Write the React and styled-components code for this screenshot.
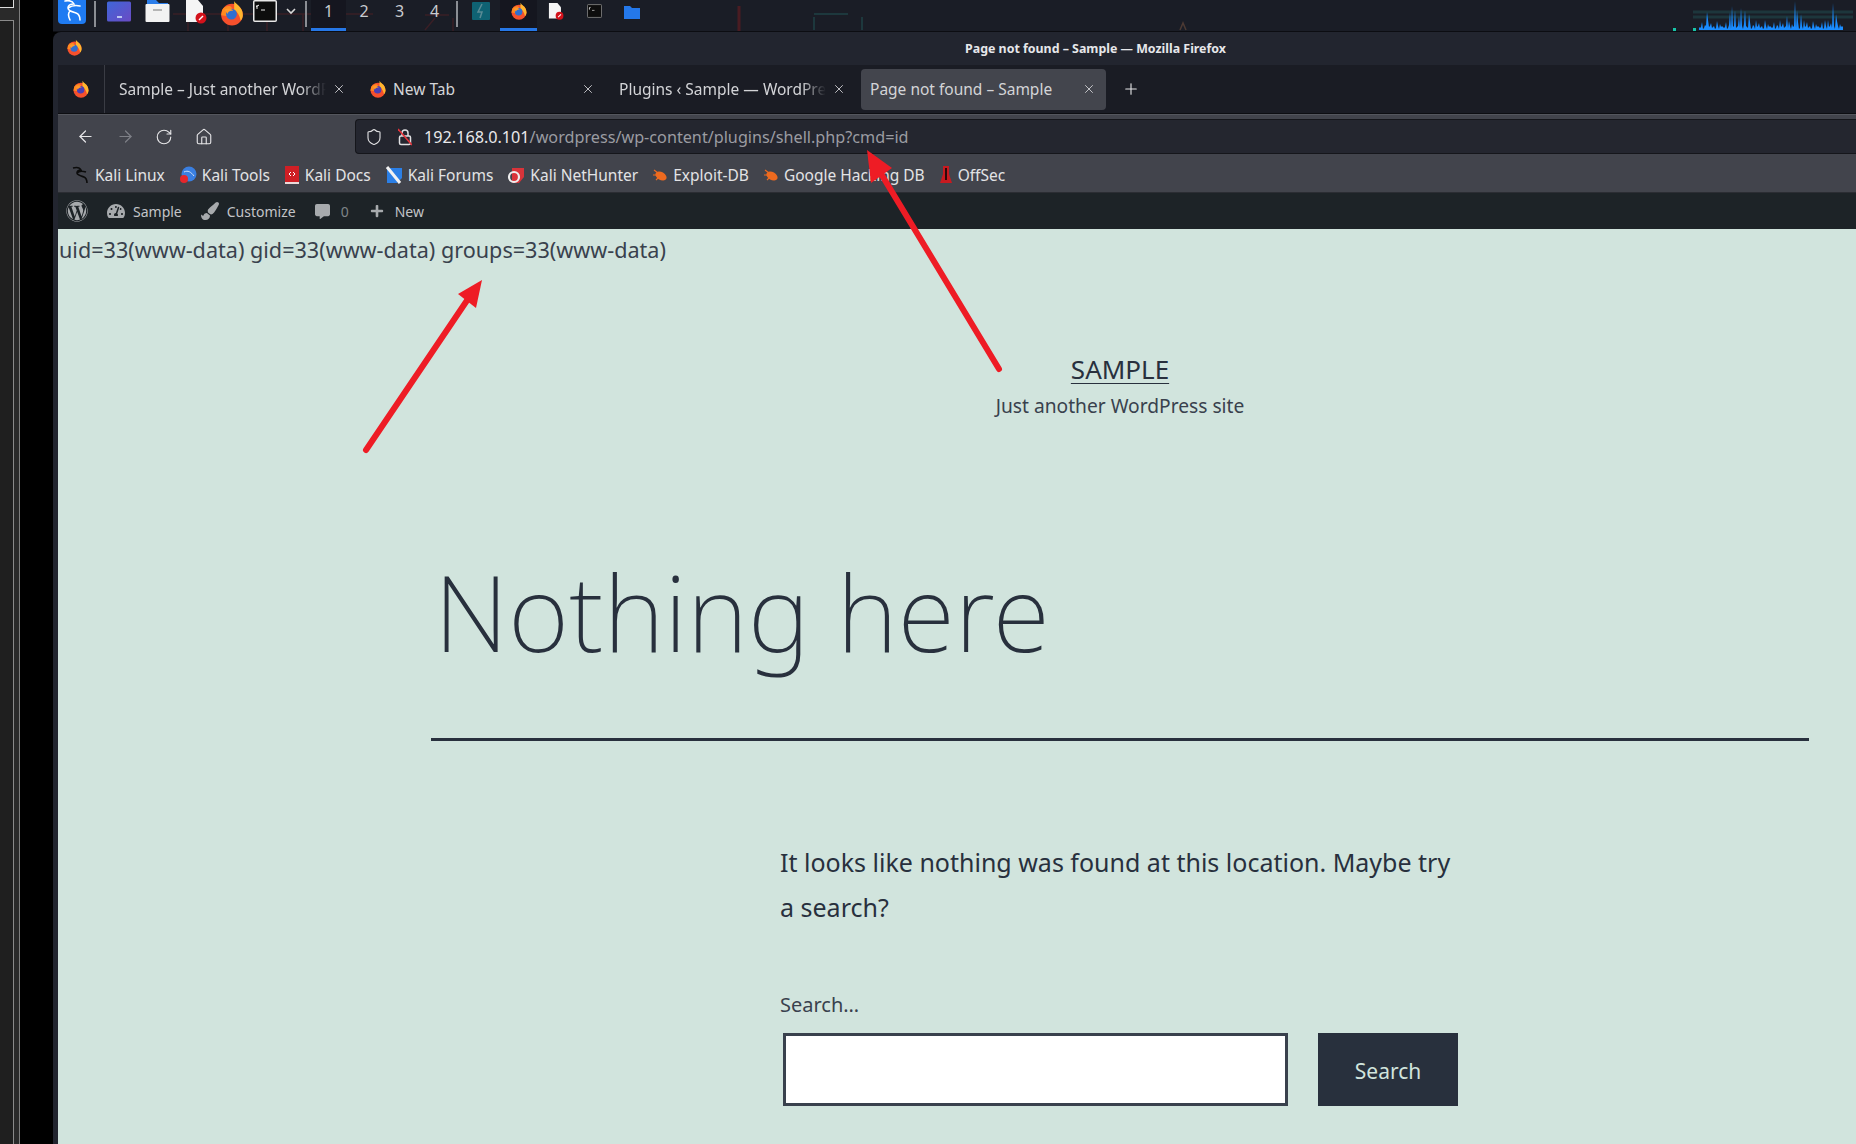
import React from "react";
import styled, { createGlobalStyle } from "styled-components";
import { ArrowLeft, ArrowRight, RotateCw, House, Shield, Plus, X } from "lucide-react";
import { FaWordpress, FaTachometerAlt, FaPaintBrush, FaCommentAlt, FaPlus } from "react-icons/fa";

const GlobalStyle = createGlobalStyle`
    html, body {
        margin: 0;
        padding: 0;
        background: #000;
        overflow: hidden;
    }
    * { box-sizing: border-box; }
`
const UI_FONT = `"Noto Sans", "Open Sans", sans-serif`;

const Screen = styled.div`
    position: relative;
    width: 1856px;
    height: 1144px;
    display: flex;
    overflow: hidden;
    background: #000;
    font-family: ${UI_FONT};
`
const LeftStrip = styled.div`
    width: 53px;
    flex-shrink: 0;
    display: flex;
    background: #000;
`
const OtherWindow = styled.div`
    width: 20px;
    background: #2a2a2a;
    border-right: 1px solid #7d7d7d;
    padding-top: 20px;
    position: relative;
`
const OtherPane = styled.div`
    width: 14px;
    height: 100%;
    background: #1f1f1f;
    border: 1px solid #8a8a8a;
    border-left: none;
    border-bottom: none;
`
const OtherTab = styled.div`
    position: absolute;
    top: 0;
    left: 0;
    width: 14px;
    height: 8px;
    background: #111;
    border: 1px solid #ddd;
    border-left: none;
    border-top: none;
`
const Desktop = styled.div`
    flex: 1;
    min-width: 0;
    display: flex;
    flex-direction: column;
`
const Panel = styled.div`
    position: relative;
    height: 32px;
    flex-shrink: 0;
    display: flex;
    background: #1a1d26;
    border-bottom: 1px solid #0c0d12;
`
const Slot = styled.div`
    width: ${p => p.$w}px;
    height: 31px;
    display: flex;
    align-items: flex-start;
    justify-content: center;
    padding-top: ${p => p.$top ?? 1}px;
    position: relative;
    z-index: 1;
    background: ${p => p.$active ? "#15161f" : "transparent"};
    border-bottom: 3px solid ${p => p.$line ? "#2677e6" : "transparent"};
`
const Sep = styled.div`
    width: 2px;
    height: 26px;
    background: #8b8e94;
`
const Workspace = styled.span`
    color: #c9ccd0;
    font-size: 16px;
    line-height: 20px;
`
const PanelTraces = styled.svg`
    position: absolute;
    left: 0;
    top: 0;
`
const Frame = styled.div`
    flex: 1;
    min-height: 0;
    display: flex;
    flex-direction: column;
    background: #22252f;
    border-top-left-radius: 8px;
`
const TitleBar = styled.div`
    height: 33px;
    flex-shrink: 0;
    position: relative;
    display: flex;
    align-items: center;
    justify-content: center;
`
const TitleIcon = styled.div`
    position: absolute;
    left: 13px;
    top: 7px;
    display: flex;
`
const TitleText = styled.span`
    color: #e6e7ea;
    font-size: 12.4px;
    font-weight: 700;
    margin-left: 282px;
`
const Inner = styled.div`
    flex: 1;
    min-height: 0;
    margin-left: 5px;
    display: flex;
    flex-direction: column;
`
const TabBar = styled.div`
    height: 49px;
    flex-shrink: 0;
    display: flex;
    align-items: center;
    background: #1a1c24;
    border-bottom: 1px solid #0d0e12;
`
const Pinned = styled.div`
    width: 47px;
    height: 100%;
    display: flex;
    align-items: center;
    justify-content: center;
    border-right: 1px solid #3a3c44;
`
const Tab = styled.div`
    width: ${p => p.$w}px;
    height: 41px;
    margin-left: ${p => p.$ml ?? 0}px;
    display: flex;
    align-items: center;
    gap: 6px;
    padding-left: ${p => p.$pl ?? 13}px;
    padding-right: ${p => p.$active ? 10 : 7}px;
    border-radius: 4px;
    background: ${p => p.$active ? "#43454d" : "transparent"};
    color: #d3d4d7;
    font-size: 15.5px;
`
const TabLabel = styled.span`
    flex: 1;
    min-width: 0;
    white-space: nowrap;
    mask-image: ${p => p.$fade ? "linear-gradient(to right, #000 88%, transparent)" : "none"};
`
const NavBar = styled.div`
    height: 44px;
    flex-shrink: 0;
    display: flex;
    align-items: center;
    background: #42444c;
    border-top: 1px solid #54565d;
    padding-left: 18px;
`
const NavBtn = styled.div`
    width: 39.5px;
    display: flex;
    color: ${p => p.$off ? "#7e8087" : "#e6e6e8"};
`
const UrlBar = styled.div`
    flex: 1;
    height: 35px;
    margin-left: 121px;
    display: flex;
    align-items: center;
    background: #24262f;
    border: 1px solid #15161b;
    border-radius: 4px 0 0 4px;
    border-right: none;
    padding-left: 9px;
    font-size: 16.2px;
    color: #9b9ca2;
`
const LockIcon = styled.svg`
    margin-left: 15px;
    margin-right: 12px;
`
const Host = styled.span`
    color: #e9e9eb;
`
const Bookmarks = styled.div`
    height: 35px;
    flex-shrink: 0;
    display: flex;
    align-items: center;
    background: #42444c;
    padding-left: 14px;
    gap: 14px;
    border-bottom: 1px solid #2b2d33;
`
const Bookmark = styled.div`
    display: flex;
    align-items: center;
    gap: 5px;
    color: #e2e3e5;
    font-size: 15.5px;
    white-space: nowrap;
`
const AdminBar = styled.div`
    height: 36px;
    flex-shrink: 0;
    display: flex;
    align-items: center;
    background: #1d2327;
    color: #c3c4c7;
    font-size: 14px;
    padding-left: 8px;
`
const AdminItem = styled.div`
    display: flex;
    align-items: center;
    gap: ${p => p.$gap ?? 8}px;
    margin-left: ${p => p.$ml ?? 0}px;
`
const AdminIcon = styled.span`
    display: flex;
    color: #a7aaad;
`
const CommentCount = styled.span`
    color: #7f8388;
`
const Page = styled.div`
    flex: 1;
    min-height: 0;
    background: #d1e4dd;
    color: #28303d;
    overflow: hidden;
`
const CmdOutput = styled.div`
    font-size: 21.6px;
    line-height: 28px;
    padding: 7px 0 0 1px;
    color: #39414d;
`
const Main = styled.main`
    padding: 0 47px 0 373px;
`
const SiteHeader = styled.header`
    margin-top: 88px;
    text-align: center;
`
const SiteName = styled.a`
    display: inline-block;
    font-size: 26px;
    line-height: 34px;
    color: #28303d;
    text-decoration: underline;
    text-decoration-thickness: 1px;
    text-underline-offset: 4px;
`
const Tagline = styled.p`
    margin: 8px 0 0;
    font-size: 19.2px;
    line-height: 24px;
    color: #39414d;
`
const PageTitle = styled.h1`
    margin: 126px 0 0;
    padding: 0 0 59px 3px;
    font-size: 104.6px;
    line-height: 135px;
    font-weight: 200;
    color: #28303d;
    border-bottom: 3px solid #28303d;
`
const Content = styled.div`
    width: 680px;
    margin: 99px auto 0;
`
const Lead = styled.p`
    margin: 0;
    font-size: 25px;
    line-height: 45px;
    color: #28303d;
`
const SearchLabel = styled.label`
    display: block;
    margin-top: 61px;
    font-size: 20px;
    line-height: 28px;
    color: #39414d;
`
const SearchRow = styled.div`
    display: flex;
    gap: 30px;
    margin: 14px 0 0 3px;
`
const SearchInput = styled.input`
    width: 505px;
    height: 73px;
    border: 3px solid #39414d;
    background: #fff;
    border-radius: 0;
    outline: none;
`
const SearchBtn = styled.button`
    width: 140px;
    height: 73px;
    border: none;
    background: #28303d;
    color: #d1e4dd;
    font-family: ${UI_FONT};
    font-size: 21px;
    padding: 2px 0 0;
`
const ArrowLayer = styled.svg`
    position: absolute;
    left: 0;
    top: 0;
    pointer-events: none;
`

const Firefox = ({ size = 18, core = "#4a3fb5" }) => (
    <svg width={size} height={size} viewBox="0 0 24 24">
        <circle cx="12" cy="13.5" r="10" fill="#f6502c" />
        <path d="M14 1c1 3 8 5 8 13 0 2-1 4-2 5-1-5-3-8-6-10z" fill="#ffb62e" />
        <path d="M3 9c2-3 5-4 8-3l2 3-5 6-6-1z" fill="#ff8a1f" />
        <circle cx="11.5" cy="13" r="5" fill={core} />
        <path d="M5 9c3-2 7-1 8 1-3-.5-5 1-5 3z" fill="#ff9a2a" />
    </svg>
);

const KaliTile = () => (
    <svg width="28" height="24" viewBox="0 0 28 24">
        <rect x="0" y="-4" width="28" height="28" rx="4" fill="#1f7bf2" />
        <path d="M7 1c5-1 8 1 9 3-4 0-6 1-6 4s5 4 8 5c3 1 4 4 4 7M10 8c3-2 8-3 12-2M12 11c-2 2-2 5 0 9" fill="none" stroke="#fff" strokeWidth="1.6" strokeLinecap="round" />
    </svg>
);
const AppsTile = () => (
    <svg width="24" height="21" viewBox="0 0 24 21">
        <defs>
            <linearGradient id="appsGrad" x1="0" y1="0" x2="1" y2="1">
                <stop offset="0" stopColor="#3f66d8" />
                <stop offset="1" stopColor="#6a4bc4" />
            </linearGradient>
        </defs>
        <rect width="24" height="20" y="0.5" rx="1.5" fill="url(#appsGrad)" />
        <rect x="10" y="15" width="5" height="2" fill="#b9c6f2" />
    </svg>
);
const FilesTile = () => (
    <svg width="25" height="23" viewBox="0 0 25 23">
        <path d="M2 0h9l3 3h9v5H2z" fill="#2b7de9" />
        <rect x="0.5" y="4" width="24" height="18" rx="1" fill="#f2f2f2" />
        <rect x="8" y="9" width="9" height="2" fill="#b5b5b5" />
    </svg>
);
const DocBadge = ({ w = 22, h = 24 }) => (
    <svg width={w} height={h} viewBox="0 0 22 24">
        <path d="M1 0h12l5 6v16H1z" fill="#f5f5f5" />
        <circle cx="16" cy="18" r="5.5" fill="#d3121b" />
        <path d="M14 20l4-4" stroke="#fff" strokeWidth="1.5" />
    </svg>
);
const TermTile = ({ w = 24, h = 22, edge = "#e8e8e8" }) => (
    <svg width={w} height={h} viewBox="0 0 24 22">
        <rect x="0.75" y="0.75" width="22.5" height="20.5" rx="1" fill="#0d0d0d" stroke={edge} strokeWidth="1.5" />
        <path d="M4 5l0 4M6 5l-3 2M8 10h4" stroke="#eee" strokeWidth="1" fill="none" />
    </svg>
);
const Chevron = () => (
    <svg width="10" height="7" viewBox="0 0 10 7">
        <path d="M1 1l4 4 4-4" fill="none" stroke="#d8d8d8" strokeWidth="1.6" />
    </svg>
);
const TealTile = () => (
    <svg width="18" height="18" viewBox="0 0 18 18">
        <rect width="18" height="18" rx="1" fill="#0f6273" />
        <path d="M10 2L6 10h4l-2 6" fill="none" stroke="#5a8b95" strokeWidth="1.5" />
    </svg>
);
const FolderTile = () => (
    <svg width="16" height="15" viewBox="0 0 16 15">
        <path d="M0 1h6l2 2h8v11H0z" fill="#2478ea" />
    </svg>
);

// blue load graph in the top right corner of the panel
const cpuPoints = () => {
    const peaks = { 8: 18, 31: 18, 33: 24, 36: 20, 40: 14, 42: 22, 46: 20, 50: 16, 66: 10, 88: 14, 96: 29, 98: 20, 102: 16, 108: 8, 126: 10, 134: 27, 137: 16 };
    const pts = ["0,30"];
    for (let i = 0; i <= 144; i++) {
        const h = peaks[i] ?? (i % 3 === 0 ? 3 + ((i * 7) % 8) : 1 + (i % 4));
        pts.push(`${i},${30 - h}`);
    }
    pts.push("144,30");
    return pts.join(" ");
};

const PanelBackground = () => (
    <PanelTraces width="1803" height="31">
        <g stroke="#3a1f26" strokeWidth="1.5" fill="none">
            <path d="M120 14h200M135 20v11M175 22v9M214 20v11M250 14v17M285 18v13M372 15h24M372 30l10-12M400 18v13" />
            <path d="M686 6v25" stroke="#4a1c22" strokeWidth="3" />
        </g>
        <g stroke="#1f4246" strokeWidth="1.5" fill="none">
            <path d="M761 14h34M761 17v13M809 17v13" />
            <path d="M1640 12h160M1640 17h160" strokeWidth="3" opacity="0.7" />
        </g>
        <path d="M1127 30l3-7 3 7" stroke="#4c3a33" strokeWidth="1.5" fill="none" />
        <rect x="1620" y="28" width="3" height="3" fill="#17c4a8" />
        <rect x="1640" y="28" width="3" height="3" fill="#17c4a8" />
        <polygon transform="translate(1646 0)" points={cpuPoints()} fill="#1a8cff" />
    </PanelTraces>
);

const KaliFav = () => (
    <svg width="18" height="18" viewBox="0 0 18 18">
        <path d="M1 2c4-1 7 0 8 2-3 0-4 1-4 3s4 3 7 4c2 1 3 3 3 6M5 7c2-2 6-2 9-1" fill="none" stroke="#0c0c0c" strokeWidth="1.6" />
    </svg>
);
const ToolsFav = () => (
    <svg width="18" height="18" viewBox="0 0 18 18">
        <circle cx="10" cy="8" r="7.5" fill="#3a7fe0" />
        <path d="M5 6c4-2 7 0 10 4" stroke="#cfe0f7" fill="none" />
        <circle cx="5" cy="13" r="4" fill="#e5262b" />
    </svg>
);
const DocsFav = () => (
    <svg width="16" height="18" viewBox="0 0 16 18">
        <rect x="1" y="0" width="14" height="16" fill="#cf1f25" />
        <rect x="1" y="16" width="14" height="2" fill="#e9d9d9" />
        <path d="M5 8l2-2M5 8l2 2M11 8L9 6M11 8l-2 2" stroke="#fff" strokeWidth="1" />
    </svg>
);
const ForumsFav = () => (
    <svg width="18" height="18" viewBox="0 0 18 18">
        <path d="M2 2h15v10l-5 5H2z" fill="#2b7fe6" />
        <path d="M2 1l13 16" stroke="#f2f2f2" strokeWidth="3" />
    </svg>
);
const HunterFav = () => (
    <svg width="18" height="18" viewBox="0 0 18 18">
        <path d="M5 2h12v9l-5 6H5z" fill="#d9343a" />
        <circle cx="7" cy="11" r="5" fill="none" stroke="#eee" strokeWidth="2.2" />
    </svg>
);
const BugFav = () => (
    <svg width="16" height="16" viewBox="0 0 16 16">
        <ellipse cx="9" cy="9" rx="6" ry="4" fill="#ee6a1f" transform="rotate(30 9 9)" />
        <path d="M2 3l4 3M1 8l4 0M4 13l3-3" stroke="#ee6a1f" strokeWidth="1.2" />
    </svg>
);
const OffSecFav = () => (
    <svg width="14" height="18" viewBox="0 0 14 18">
        <path d="M4 0h6v8l3 9H1l3-9z" fill="#c71a20" />
        <rect x="6" y="2" width="2" height="12" fill="#2a0a0a" />
    </svg>
);

const bookmarks = [
    [<KaliFav key="i" />, "Kali Linux"],
    [<ToolsFav key="i" />, "Kali Tools"],
    [<DocsFav key="i" />, "Kali Docs"],
    [<ForumsFav key="i" />, "Kali Forums"],
    [<HunterFav key="i" />, "Kali NetHunter"],
    [<BugFav key="i" />, "Exploit-DB"],
    [<BugFav key="i" />, "Google Hacking DB"],
    [<OffSecFav key="i" />, "OffSec"],
];

const App = () => {
    return (
        <Screen>
            <GlobalStyle />
            <LeftStrip>
                <OtherWindow>
                    <OtherTab />
                    <OtherPane />
                </OtherWindow>
            </LeftStrip>
            <Desktop>
                <Panel>
                    <PanelBackground />
                    <Slot $w={37} $top={0}><KaliTile /></Slot>
                    <Slot $w={10}><Sep /></Slot>
                    <Slot $w={37}><AppsTile /></Slot>
                    <Slot $w={40} $top={0}><FilesTile /></Slot>
                    <Slot $w={37} $top={0}><DocBadge /></Slot>
                    <Slot $w={36} $top={0}><Firefox size={26} core="#2f6fd0" /></Slot>
                    <Slot $w={30} $top={0}><TermTile /></Slot>
                    <Slot $w={21} $top={8}><Chevron /></Slot>
                    <Slot $w={10}><Sep /></Slot>
                    <Slot $w={35} $active $line><Workspace>1</Workspace></Slot>
                    <Slot $w={36}><Workspace>2</Workspace></Slot>
                    <Slot $w={35}><Workspace>3</Workspace></Slot>
                    <Slot $w={35}><Workspace>4</Workspace></Slot>
                    <Slot $w={10}><Sep /></Slot>
                    <Slot $w={38} $top={2}><TealTile /></Slot>
                    <Slot $w={37} $top={2} $active $line><Firefox size={18} core="#2f6fd0" /></Slot>
                    <Slot $w={38} $top={3}><DocBadge w={16} h={17} /></Slot>
                    <Slot $w={38} $top={3}><TermTile w={15} h={16} edge="#777" /></Slot>
                    <Slot $w={38} $top={5}><FolderTile /></Slot>
                </Panel>
                <Frame>
                    <TitleBar>
                        <TitleIcon><Firefox size={17} core="#2f6fd0" /></TitleIcon>
                        <TitleText>Page not found – Sample — Mozilla Firefox</TitleText>
                    </TitleBar>
                    <Inner>
                        <TabBar>
                            <Pinned><Firefox size={18} /></Pinned>
                            <Tab $w={248} $pl={14}>
                                <TabLabel $fade>Sample – Just another WordP</TabLabel>
                                <X size={14} strokeWidth={1.5} />
                            </Tab>
                            <Tab $w={250} $ml={-1} $pl={17}>
                                <Firefox size={18} />
                                <TabLabel>New Tab</TabLabel>
                                <X size={14} strokeWidth={1.5} />
                            </Tab>
                            <Tab $w={251} $pl={17}>
                                <TabLabel $fade>Plugins ‹ Sample — WordPre</TabLabel>
                                <X size={14} strokeWidth={1.5} />
                            </Tab>
                            <Tab $w={245} $ml={8} $pl={9} $active>
                                <TabLabel>Page not found – Sample</TabLabel>
                                <X size={14} strokeWidth={1.5} />
                            </Tab>
                            <Tab $w={40} $ml={9} $pl={7}>
                                <Plus size={18} strokeWidth={1.5} color="#e6e6e8" />
                            </Tab>
                        </TabBar>
                        <NavBar>
                            <NavBtn><ArrowLeft size={19} strokeWidth={1.5} /></NavBtn>
                            <NavBtn $off><ArrowRight size={19} strokeWidth={1.5} /></NavBtn>
                            <NavBtn><RotateCw size={18} strokeWidth={1.5} /></NavBtn>
                            <NavBtn><House size={18} strokeWidth={1.5} /></NavBtn>
                            <UrlBar>
                                <Shield size={18} strokeWidth={1.5} color="#e0e0e2" />
                                <LockIcon width="14" height="18" viewBox="0 0 14 18">
                                    <rect x="1.5" y="8" width="11" height="8.5" rx="1.5" fill="none" stroke="#e0e0e2" strokeWidth="1.5" />
                                    <path d="M4 8V5a3 3 0 0 1 6 0v3" fill="none" stroke="#e0e0e2" strokeWidth="1.5" />
                                    <path d="M0 1l14 16" stroke="#e3323a" strokeWidth="1.5" />
                                </LockIcon>
                                <Host>192.168.0.101</Host>/wordpress/wp-content/plugins/shell.php?cmd=id
                            </UrlBar>
                        </NavBar>
                        <Bookmarks>
                            {bookmarks.map(([icon, name]) => (
                                <Bookmark key={name}>{icon}{name}</Bookmark>
                            ))}
                        </Bookmarks>
                        <AdminBar>
                            <AdminItem><AdminIcon><FaWordpress size={22} /></AdminIcon></AdminItem>
                            <AdminItem $ml={19}><AdminIcon><FaTachometerAlt size={18} /></AdminIcon>Sample</AdminItem>
                            <AdminItem $ml={19}><AdminIcon><FaPaintBrush size={18} /></AdminIcon>Customize</AdminItem>
                            <AdminItem $ml={19} $gap={11}><AdminIcon><FaCommentAlt size={15} /></AdminIcon><CommentCount>0</CommentCount></AdminItem>
                            <AdminItem $ml={21} $gap={11}><AdminIcon><FaPlus size={14} /></AdminIcon>New</AdminItem>
                        </AdminBar>
                        <Page>
                            <CmdOutput>uid=33(www-data) gid=33(www-data) groups=33(www-data)</CmdOutput>
                            <Main>
                                <SiteHeader>
                                    <SiteName>SAMPLE</SiteName>
                                    <Tagline>Just another WordPress site</Tagline>
                                </SiteHeader>
                                <PageTitle>Nothing here</PageTitle>
                                <Content>
                                    <Lead>It looks like nothing was found at this location. Maybe try a search?</Lead>
                                    <SearchLabel>Search…</SearchLabel>
                                    <SearchRow>
                                        <SearchInput />
                                        <SearchBtn>Search</SearchBtn>
                                    </SearchRow>
                                </Content>
                            </Main>
                        </Page>
                    </Inner>
                </Frame>
            </Desktop>
            <ArrowLayer width="1856" height="1144">
                <line x1="366" y1="450" x2="470" y2="296" stroke="#ee1c25" strokeWidth="6" strokeLinecap="round" />
                <polygon points="482,280 458,294 476,308" fill="#ee1c25" />
                <line x1="999" y1="369" x2="880" y2="172" stroke="#ee1c25" strokeWidth="6" strokeLinecap="round" />
                <polygon points="867,150 892,168 871,183" fill="#ee1c25" />
            </ArrowLayer>
        </Screen>
    );
};
export default App;
